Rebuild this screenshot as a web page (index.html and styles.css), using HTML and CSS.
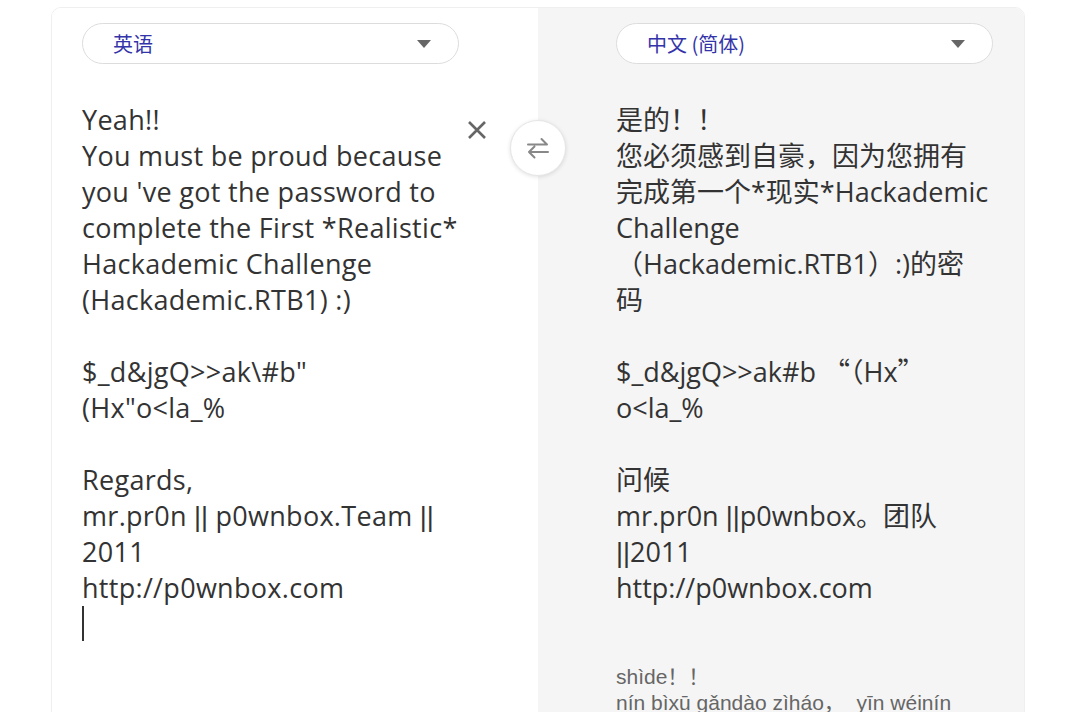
FILE: index.html
```html
<!DOCTYPE html>
<html lang="zh">
<head>
<meta charset="utf-8">
<title>Translator</title>
<link rel="stylesheet" href="styles.css">
</head>
<body>
<div class="card">
  <section class="panel panel-source">
    <div class="lang-pill">
      <span class="lang-name">英语</span>
      <span class="caret"></span>
    </div>
    <div class="text-row">
      <div class="text source-text">Yeah!!<br>You must be proud because<br>you 've got the password to<br>complete the First *Realistic*<br>Hackademic Challenge<br>(Hackademic.RTB1) :)<br>&nbsp;<br>$_d&amp;jgQ&gt;&gt;ak\#b"<br>(Hx"o&lt;la_%<br>&nbsp;<br>Regards,<br>mr.pr0n <span class="pipe">||</span> p0wnbox.Team <span class="pipe">||</span><br>2011<br>http://p0wnbox.com<br><span class="caret-line"></span></div>
      <button class="clear-btn" aria-label="清除">
        <svg width="20" height="20" viewBox="0 0 20 20"><path d="M2 2 L18 18 M18 2 L2 18" stroke="#666" stroke-width="2.6" fill="none"/></svg>
      </button>
    </div>
  </section>
  <section class="panel panel-target">
    <div class="lang-pill">
      <span class="lang-name">中文 (简体)</span>
      <span class="caret"></span>
    </div>
    <div class="text target-text">是的！！<br>您必须感到自豪，因为您拥有<br>完成第一个*现实*Hackademic<br>Challenge<br>（Hackademic.RTB1）:)的密<br>码<br>&nbsp;<br>$_d&amp;jgQ&gt;&gt;ak#b <span class="cjk">“（</span>Hx<span class="cjk">”</span><br>o&lt;la_%<br>&nbsp;<br>问候<br>mr.pr0n <span class="pipe">||</span>p0wnbox。团队<br><span class="pipe">||</span>2011<br>http://p0wnbox.com</div>
    <div class="pinyin">shìde！！<br>nín bìxū gǎndào zìháo，&nbsp; yīn wéinín</div>
  </section>
  <button class="swap-btn" aria-label="交换">
    <svg width="26" height="26" viewBox="0 0 26 26"><path d="M3 9.5 H22 M16.5 4 L22 9.5 M23 17 H4 M9.5 11.5 L4 17 L9.5 22.5" stroke="#888" stroke-width="2" fill="none" stroke-linecap="round" stroke-linejoin="round"/></svg>
  </button>
</div>
</body>
</html>
```
FILE: styles.css
```css
html, body {
  margin: 0;
  padding: 0;
  background: #fff;
  overflow: hidden;
}
body {
  font-family: "Open Sans", "Noto Sans CJK SC", sans-serif;
  color: #333;
}
.card {
  position: relative;
  margin: 7px 0 0 51px;
  width: 974px;
  height: 760px;
  display: flex;
  border: 1px solid #efefef;
  border-radius: 10px;
  overflow: hidden;
  box-sizing: border-box;
}
.panel {
  box-sizing: border-box;
  padding-top: 15px;
}
.panel-source {
  width: 486px;
  padding-left: 30px;
  background: #fff;
}
.panel-target {
  flex: 1;
  padding-left: 78px;
  background: #f5f5f5;
}
.lang-pill {
  width: 377px;
  height: 41px;
  box-sizing: border-box;
  border: 1px solid #dcdcdc;
  border-radius: 21px;
  background: #fff;
  display: flex;
  align-items: center;
  justify-content: space-between;
  padding: 0 27px 0 30px;
}
.lang-name {
  font-family: "Noto Sans CJK SC", "Open Sans", sans-serif;
  font-size: 20px;
  color: #3434aa;
}
.caret {
  width: 0;
  height: 0;
  border-left: 7.5px solid transparent;
  border-right: 7.5px solid transparent;
  border-top: 8px solid #666;
}
.text-row {
  display: flex;
  align-items: flex-start;
}
.text {
  margin-top: 38px;
  font-size: 27px;
  line-height: 36px;
  white-space: nowrap;
}
.source-text {
  width: 375px;
  letter-spacing: 0.3px;
}
.pipe {
  font-family: "Liberation Sans", sans-serif;
  letter-spacing: 0;
  line-height: 0;
}
.cjk {
  font-family: "Noto Sans CJK SC", sans-serif;
  line-height: 0;
}
.caret-line {
  display: inline-block;
  width: 2px;
  height: 35px;
  background: #333;
  vertical-align: top;
}
.clear-btn {
  margin: 56px 0 0 10px;
  padding: 0;
  border: 0;
  background: none;
  width: 20px;
  height: 20px;
  display: flex;
}
.pinyin {
  margin-top: 58px;
  font-family: "Liberation Sans", "Noto Sans CJK SC", sans-serif;
  font-size: 21px;
  line-height: 26px;
  color: #666;
}
.swap-btn {
  position: absolute;
  left: 458px;
  top: 112px;
  width: 56px;
  height: 56px;
  border-radius: 50%;
  border: 1px solid #e6e6e6;
  background: #fff;
  box-shadow: 0 1px 4px rgba(0,0,0,0.12);
  display: flex;
  align-items: center;
  justify-content: center;
  padding: 0;
}
```
